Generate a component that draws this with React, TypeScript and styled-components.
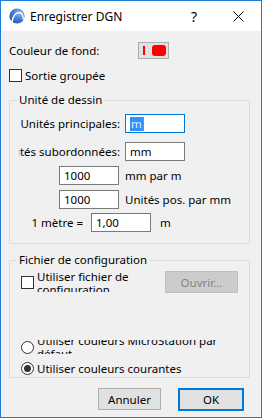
import React from "react";
import styled, { createGlobalStyle } from "styled-components";

const GlobalStyle = createGlobalStyle`
    html, body {
        margin: 0;
        padding: 0;
        background: #ffffff;
    }
    body {
        font-family: "Noto Sans", "Open Sans", sans-serif;
        font-size: 11.5px;
        color: #000000;
    }
    * {
        box-sizing: border-box;
    }
`

const Window = styled.div`
    width: 262px;
    height: 418px;
    border: 1px solid #1a7fd6;
    display: flex;
    flex-direction: column;
    background: #f0f0f0;
`
const TitleBar = styled.div`
    height: 30px;
    background: #ffffff;
    display: flex;
    align-items: center;
    padding-left: 8px;
`
const Title = styled.span`
    margin-left: 5px;
    font-size: 12px;
`
const HelpMark = styled.span`
    margin-left: auto;
    font-size: 14px;
`
const CloseMark = styled.svg`
    margin-left: 36px;
    margin-right: 17px;
`
const Body = styled.div`
    flex: 1;
    padding-left: 8px;
    display: flex;
    flex-direction: column;
`
const Row = styled.div<{ $top: number; $h: number; $indent?: number }>`
    display: flex;
    align-items: center;
    height: ${(p) => p.$h}px;
    margin-top: ${(p) => p.$top}px;
    margin-left: ${(p) => p.$indent || 0}px;
    white-space: nowrap;
`
const FondLabel = styled.span`
    width: 129px;
`
const ColorButton = styled.div`
    width: 31px;
    height: 17px;
    background: #e1e1e1;
    border: 1px solid #adadad;
    display: flex;
    align-items: center;
    padding-left: 4px;
    gap: 7px;
`
const RedBar = styled.div`
    width: 2px;
    height: 9px;
    background: #ff0000;
`
const RedChip = styled.div`
    width: 14px;
    height: 11px;
    border-radius: 3px;
    background: #ff0000;
`
const CheckBox = styled.div`
    width: 13px;
    height: 13px;
    flex: none;
    border: 1px solid #333333;
    background: #ffffff;
`
const Radio = styled.div<{ $on?: boolean }>`
    width: 13px;
    height: 13px;
    flex: none;
    border-radius: 50%;
    border: 1px solid #333333;
    background: #ffffff;
    display: flex;
    align-items: center;
    justify-content: center;
    &::after {
        content: "";
        width: 7px;
        height: 7px;
        border-radius: 50%;
        background: ${(p) => (p.$on ? "#333333" : "transparent")};
    }
`
const OptionText = styled.span`
    margin-left: 3px;
`
const Group = styled.fieldset<{ $top: number; $h: number }>`
    margin: ${(p) => p.$top}px 0 0 0;
    padding: 0;
    width: 241px;
    height: ${(p) => p.$h}px;
    min-width: 0;
    border: 1px solid #dcdcdc;
`
const Legend = styled.legend`
    margin-left: 7px;
    padding: 0 2px;
    line-height: 16px;
    font-size: 11.5px;
`
const RightLabel = styled.div<{ $w: number; $clip?: boolean; $pad?: number }>`
    width: ${(p) => p.$w}px;
    flex: none;
    display: flex;
    justify-content: flex-end;
    padding-right: ${(p) => p.$pad || 0}px;
    overflow: ${(p) => (p.$clip ? "hidden" : "visible")};
    white-space: nowrap;
`
const Field = styled.div<{ $focus?: boolean }>`
    width: 60px;
    height: 19px;
    flex: none;
    background: #ffffff;
    border: 1px solid ${(p) => (p.$focus ? "#0078d7" : "#7a7a7a")};
    display: flex;
    align-items: center;
    padding-left: 4px;
`
const Selected = styled.span`
    background: #3390ff;
    color: #dfefff;
    line-height: 14px;
    padding: 0 1px;
    border-right: 1px solid #d87a20;
`
const After = styled.span<{ $gap: number }>`
    margin-left: ${(p) => p.$gap}px;
`
const ClipBox = styled.div<{ $w: number; $h: number; $center?: boolean }>`
    width: ${(p) => p.$w}px;
    height: ${(p) => p.$h}px;
    margin-left: 3px;
    overflow: hidden;
    display: flex;
    align-items: ${(p) => (p.$center ? "center" : "flex-start")};
    align-self: flex-start;
    white-space: normal;
    line-height: 13px;
`
const DisabledButton = styled.div`
    margin-left: auto;
    margin-right: 11px;
    width: 73px;
    height: 22px;
    background: #cccccc;
    border: 1px solid #bfbfbf;
    color: #838383;
    display: flex;
    align-items: center;
    justify-content: center;
`
const ButtonBar = styled.div`
    display: flex;
    justify-content: flex-end;
    align-items: flex-start;
    gap: 17px;
    margin-top: 10px;
    margin-right: 17px;
`
const Button = styled.div<{ $default?: boolean }>`
    width: ${(p) => (p.$default ? 66 : 63)}px;
    height: ${(p) => (p.$default ? 23 : 22)}px;
    background: #e1e1e1;
    border: ${(p) => (p.$default ? "2px solid #0078d7" : "1px solid #adadad")};
    display: flex;
    align-items: center;
    justify-content: center;
`

const AppIcon = () => (
    <svg width="16" height="16" viewBox="0 0 16 16">
        <defs>
            <radialGradient id="ac" cx="0.65" cy="0.3" r="0.85">
                <stop offset="0" stopColor="#8db9f2" />
                <stop offset="0.55" stopColor="#3f78d0" />
                <stop offset="1" stopColor="#1d469c" />
            </radialGradient>
        </defs>
        <circle cx="8" cy="8" r="7.6" fill="url(#ac)" />
        <path d="M3 14 C3.8 8 7 4.2 10.5 4.4 C13 4.6 14.2 7.5 14.2 11.5" stroke="#ffffff" strokeWidth="1.5" fill="none" />
    </svg>
)

const App = () => {
    return (
        <Window>
            <GlobalStyle />
            <TitleBar>
                <AppIcon />
                <Title>Enregistrer DGN</Title>
                <HelpMark>?</HelpMark>
                <CloseMark width="11" height="11" viewBox="0 0 11 11">
                    <path d="M0.5 0.5 L10.5 10.5 M10.5 0.5 L0.5 10.5" stroke="#000000" strokeWidth="1" />
                </CloseMark>
            </TitleBar>
            <Body>
                <Row $top={11} $h={17}>
                    <FondLabel>Couleur de fond:</FondLabel>
                    <ColorButton>
                        <RedBar />
                        <RedChip />
                    </ColorButton>
                </Row>
                <Row $top={10} $h={13}>
                    <CheckBox />
                    <OptionText>Sortie groupée</OptionText>
                </Row>

                <Group $top={10} $h={152}>
                    <Legend>Unité de dessin</Legend>
                    <Row $top={6} $h={19} $indent={9}>
                        <RightLabel $w={101} $clip>Unités principales:</RightLabel>
                        <After $gap={5}>
                            <Field $focus>
                                <Selected>m</Selected>
                            </Field>
                        </After>
                    </Row>
                    <Row $top={9} $h={19} $indent={9}>
                        <RightLabel $w={101} $clip>Unités subordonnées:</RightLabel>
                        <After $gap={5}>
                            <Field>mm</Field>
                        </After>
                    </Row>
                    <Row $top={5} $h={19} $indent={49}>
                        <Field>1000</Field>
                        <After $gap={6}>mm par m</After>
                    </Row>
                    <Row $top={5} $h={19} $indent={49}>
                        <Field>1000</Field>
                        <After $gap={6}>Unités pos. par mm</After>
                    </Row>
                    <Row $top={4} $h={19} $indent={24}>
                        <RightLabel $w={57} $pad={8}>1 mètre =</RightLabel>
                        <Field>1,00</Field>
                        <After $gap={9}>m</After>
                    </Row>
                </Group>

                <Group $top={8} $h={126}>
                    <Legend>Fichier de configuration</Legend>
                    <Row $top={2} $h={24} $indent={11}>
                        <CheckBox />
                        <ClipBox $w={120} $h={22}>Utiliser fichier de configuration</ClipBox>
                        <DisabledButton>Ouvrir...</DisabledButton>
                    </Row>
                    <Row $top={46} $h={14} $indent={11}>
                        <Radio />
                        <ClipBox $w={205} $h={14} $center>
                            <span>Utiliser couleurs MicroStation par défaut</span>
                        </ClipBox>
                    </Row>
                    <Row $top={7} $h={14} $indent={11}>
                        <Radio $on />
                        <OptionText>Utiliser couleurs courantes</OptionText>
                    </Row>
                </Group>

                <ButtonBar>
                    <Button>Annuler</Button>
                    <Button $default>OK</Button>
                </ButtonBar>
            </Body>
        </Window>
    );
};

export default App;
